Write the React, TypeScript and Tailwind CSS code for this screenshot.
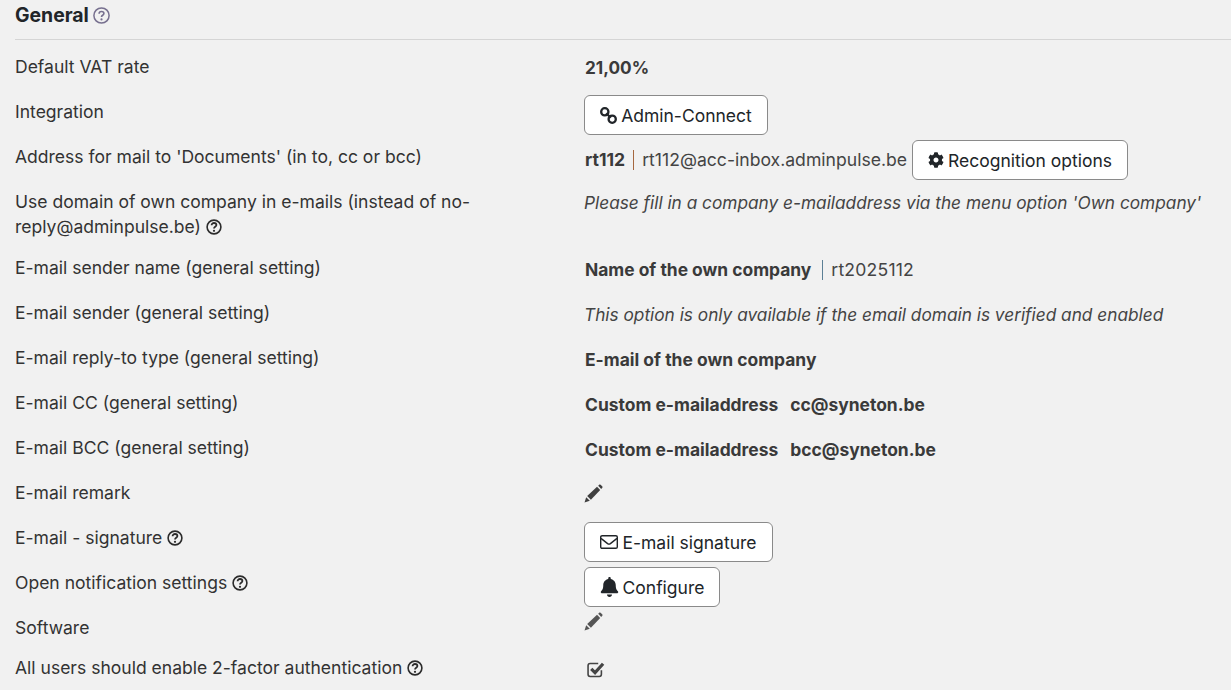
import { FaCog, FaBell } from "react-icons/fa";
import type { ReactNode } from "react";

function Help({ cls = "text-[#2b2b2b]" }: { cls?: string }) {
  return (
    <svg viewBox="0 0 16 16" className={`inline-block w-[16px] h-[16px] align-[-2px] ml-[5px] ${cls}`} fill="none" stroke="currentColor">
      <circle cx="8" cy="8" r="6.9" strokeWidth="1.6" />
      <path d="M5.6 6.2c0-1.4 1.1-2.2 2.4-2.2s2.4.8 2.4 2c0 1.8-2.4 1.7-2.4 3.4" strokeWidth="1.8" />
      <circle cx="8" cy="11.8" r="1.1" fill="currentColor" stroke="none" />
    </svg>
  );
}

function Pencil({ cls }: { cls: string }) {
  return (
    <svg viewBox="0 0 19 19" className={`block w-[19px] h-[19px] ${cls}`} fill="currentColor">
      <path d="M0.5 18.5 L2.2 13.2 L5.8 16.8 Z" />
      <path d="M3.2 12 L13 2.7 L16.2 6 L6.9 15.8 Z" />
      <path d="M14.2 1.7 L15.4 0.6 Q16 0.2 16.6 0.7 L18.4 2.6 Q18.8 3.2 18.3 3.8 L17.2 4.9 Z" />
    </svg>
  );
}

function LinkIcon() {
  return (
    <svg viewBox="0 0 17 17" className="block w-[17px] h-[17px]" fill="none" stroke="currentColor" strokeWidth="2.3">
      <rect x="1.2" y="1.2" width="7.2" height="7.2" rx="3.5" />
      <rect x="8.6" y="8.6" width="7.2" height="7.2" rx="3.5" />
      <path d="M6.2 6.2 L10.8 10.8" />
    </svg>
  );
}

function MailIcon() {
  return (
    <svg viewBox="0 0 18 14" className="block w-[18px] h-[14px]" fill="none" stroke="currentColor" strokeWidth="1.4">
      <rect x="0.7" y="0.7" width="16.6" height="12.6" rx="1.4" />
      <path d="M1 3.4 L7.6 8.6 Q9 9.6 10.4 8.6 L17 3.4" />
    </svg>
  );
}

function CheckIcon() {
  return (
    <svg viewBox="0 0 17 16" className="block w-[18px] h-[17px] text-[#444]" fill="none" stroke="currentColor">
      <path d="M13.6 8.6 V12.6 Q13.6 14.6 11.6 14.6 H3 Q1 14.6 1 12.6 V4.4 Q1 2.4 3 2.4 H10.6" strokeWidth="1.5" />
      <path d="M4 7.4 L7.6 11 L15.2 2.6" strokeWidth="3" />
    </svg>
  );
}

function Btn({ icon, children, w }: { icon: ReactNode; children: ReactNode; w: string }) {
  return (
    <button className={`h-[40px] ${w} flex items-center justify-center gap-[4px] rounded-[6px] border border-[#8a8a8a] bg-white text-[#212529] text-[17.5px]`}>
      {icon}
      <span className="pt-[2px]">{children}</span>
    </button>
  );
}

function Row({ label, children, h = "h-[45px]" }: { label: ReactNode; children: ReactNode; h?: string }) {
  return (
    <div className={`flex ${h}`}>
      <div className="w-[569px] pr-[100px] leading-[25px] text-[#333] shrink-0 text-[17.55px]">{label}</div>
      <div className="flex-1 min-w-0 whitespace-nowrap">{children}</div>
    </div>
  );
}

const strong = "font-bold text-[17.45px] leading-[25px] mt-[2px] ml-[1px] text-[#3a3a3a]";
const em = "italic text-[#444] text-[17.25px] leading-[25px]";

export default function App() {
  return (
    <div className="h-[690px] w-[1231px] overflow-hidden bg-[#f1f1f1] pl-[15px] text-[17.6px] text-[#333] font-['Inter',sans-serif]">
      <div className="h-[40px] border-b border-[#d5d5d5] text-[19.4px] font-bold text-[#212529] leading-[31px] flex items-start">
        <span>General</span>
        <svg viewBox="0 0 17 17" className="w-[17px] h-[17px] ml-[4px] mt-[7px] text-[#77708f]" fill="none" stroke="currentColor">
          <circle cx="8.5" cy="8.5" r="7.6" strokeWidth="1.5" />
          <path d="M6.1 6.7c0-1.4 1.1-2.2 2.4-2.2s2.4.8 2.4 2c0 1.8-2.4 1.7-2.4 3.4" strokeWidth="1.6" />
          <circle cx="8.5" cy="12.4" r="1.1" fill="currentColor" stroke="none" />
        </svg>
      </div>
      <div className="pt-[14px]">
        <Row label="Default VAT rate">
          <div className="font-bold text-[17.2px] leading-[25px] mt-[1px] ml-[1px] text-[#3a3a3a]">21,00%</div>
        </Row>
        <Row label="Integration">
          <div className="-mt-[4px]">
            <Btn w="w-[184px]" icon={<LinkIcon />}>Admin-Connect</Btn>
          </div>
        </Row>
        <Row label="Address for mail to 'Documents' (in to, cc or bcc)">
          <div className="-mt-[4px] flex items-center">
            <span className="font-bold text-[17.6px] text-[#3a3a3a] ml-[1px]">rt112</span>
            <span className="ml-[8px] mr-[8px] w-px h-[20px] bg-[#a5673f]" />
            <span className="text-[#444]">rt112@acc-inbox.adminpulse.be</span>
            <span className="ml-[5px]">
              <Btn w="w-[216px]" icon={<FaCog className="w-[16px] h-[16px]" />}>Recognition options</Btn>
            </span>
          </div>
        </Row>
        <Row h="h-[66px]" label={<>Use domain of own company in e-mails (instead of no-reply@adminpulse.be)<Help /></>}>
          <div className={`${em} mt-[1px]`}>Please fill in a company e-mailaddress via the menu option 'Own company'</div>
        </Row>
        <Row label="E-mail sender name (general setting)">
          <div className="flex items-center leading-[25px] mt-[2px]">
            <span className="font-bold text-[17.4px] text-[#3a3a3a] ml-[1px]">Name of the own company</span>
            <span className="ml-[11px] mr-[8px] w-px h-[20px] bg-[#5b7f95]" />
            <span className="text-[#444] tracking-[0.2px]">rt2025112</span>
          </div>
        </Row>
        <Row label="E-mail sender (general setting)">
          <div className={`${em} mt-[2px]`}>This option is only available if the email domain is verified and enabled</div>
        </Row>
        <Row label="E-mail reply-to type (general setting)">
          <div className={strong}>E-mail of the own company</div>
        </Row>
        <Row label="E-mail CC (general setting)">
          <div className={`${strong} flex gap-[12px]`}><span>Custom e-mailaddress</span><span>cc@syneton.be</span></div>
        </Row>
        <Row label="E-mail BCC (general setting)">
          <div className={`${strong} flex gap-[12px]`}><span>Custom e-mailaddress</span><span>bcc@syneton.be</span></div>
        </Row>
        <Row label="E-mail remark">
          <Pencil cls="mt-[4px] text-[#3f3f3f]" />
        </Row>
        <Row label={<>E-mail - signature<Help /></>}>
          <div className="-mt-[3px]">
            <Btn w="w-[189px]" icon={<MailIcon />}>E-mail signature</Btn>
          </div>
        </Row>
        <Row label={<>Open notification settings<Help /></>}>
          <div className="-mt-[3px]">
            <Btn w="w-[136px]" icon={<FaBell className="w-[19px] h-[20px]" />}>Configure</Btn>
          </div>
        </Row>
        <Row h="h-[40px]" label="Software">
          <Pencil cls="-mt-[3px] text-[#555]" />
        </Row>
        <Row label={<>All users should enable 2-factor authentication<Help /></>}>
          <div className="mt-[6px] ml-[3px]"><CheckIcon /></div>
        </Row>
      </div>
    </div>
  );
}
